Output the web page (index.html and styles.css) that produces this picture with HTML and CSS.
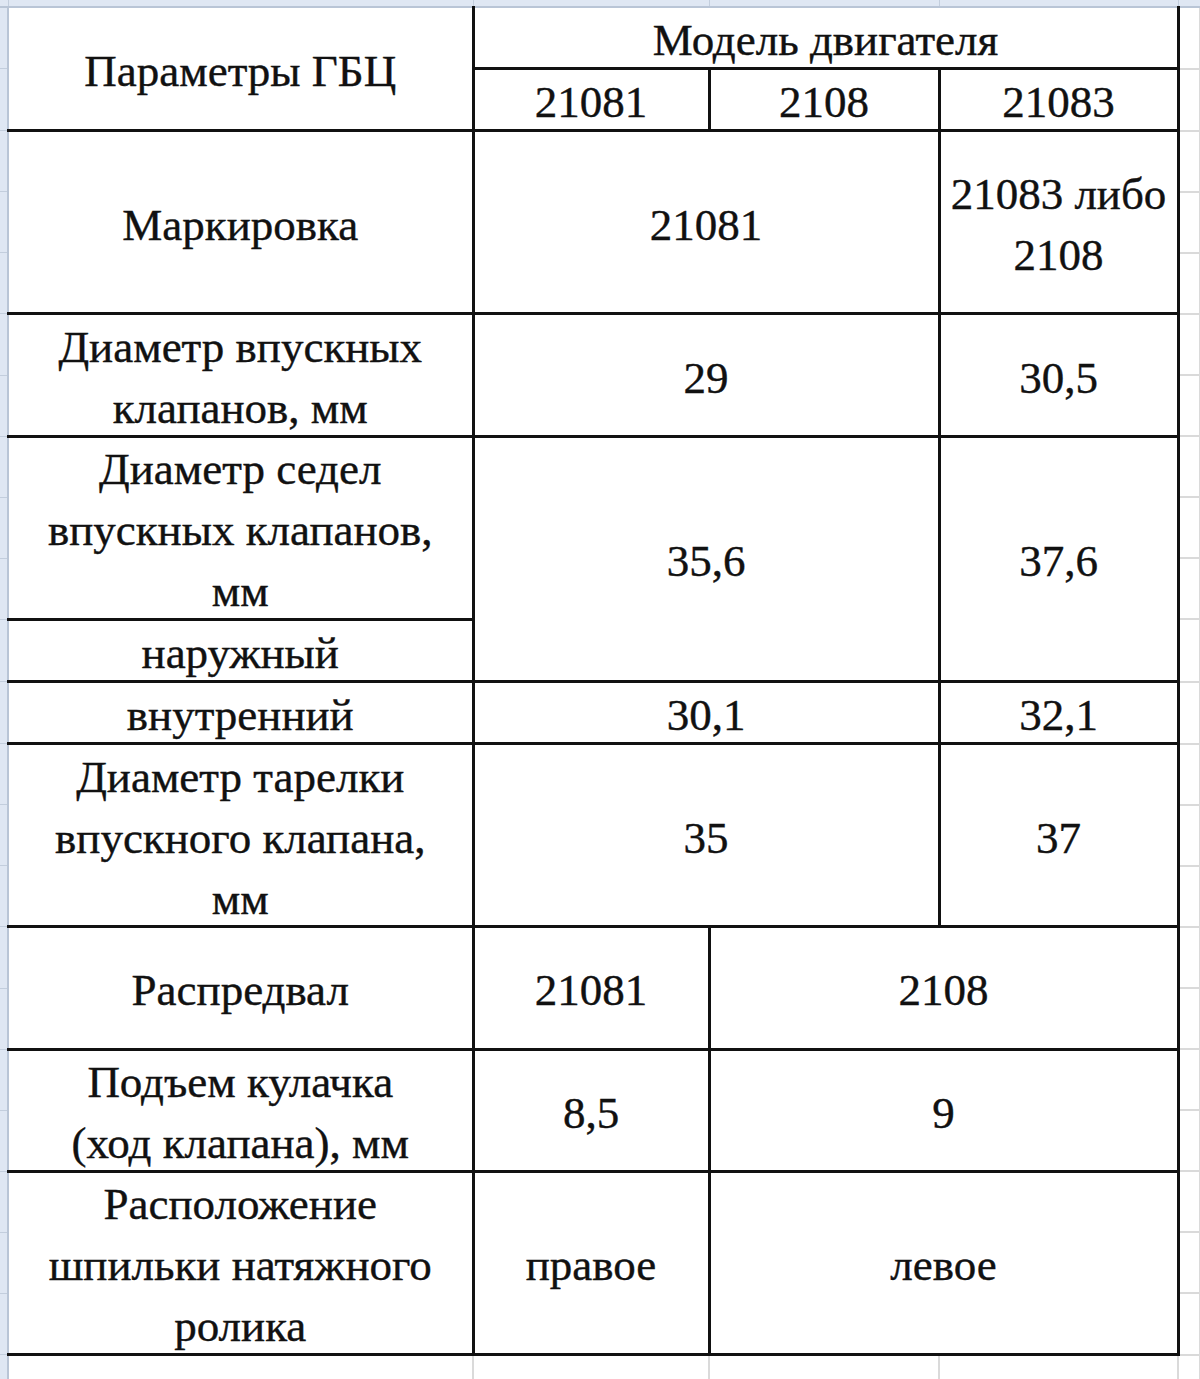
FILE: index.html
```html
<!DOCTYPE html>
<html lang="ru">
<head>
<meta charset="utf-8">
<title>Параметры ГБЦ</title>
<link rel="stylesheet" href="styles.css">
</head>
<body>
<table class="sheet">
  <colgroup>
    <col class="c-rh">
    <col class="c-a">
    <col class="c-b">
    <col class="c-c">
    <col class="c-d">
    <col class="c-e">
  </colgroup>
  <tr class="hdr">
    <td class="corner"></td>
    <td class="ch"></td>
    <td class="ch"></td>
    <td class="ch"></td>
    <td class="ch"></td>
    <td class="ch"></td>
  </tr>
  <tr class="r">
    <td class="rh"></td>
    <td class="cell first-col top" rowspan="2"><div class="t">Параметры ГБЦ</div></td>
    <td class="cell top" colspan="3"><div class="t">Модель двигателя</div></td>
    <td class="out"></td>
  </tr>
  <tr class="r">
    <td class="rh"></td>
    <td class="cell"><div class="t">21081</div></td>
    <td class="cell"><div class="t">2108</div></td>
    <td class="cell"><div class="t">21083</div></td>
    <td class="out"></td>
  </tr>
  <tr class="r">
    <td class="rh"></td>
    <td class="cell first-col" rowspan="3"><div class="t">Маркировка</div></td>
    <td class="cell" colspan="2" rowspan="3"><div class="t">21081</div></td>
    <td class="cell" rowspan="3"><div class="t">21083 либо<br>2108</div></td>
    <td class="out"></td>
  </tr>
  <tr class="r"><td class="rh"></td><td class="out"></td></tr>
  <tr class="r"><td class="rh"></td><td class="out"></td></tr>
  <tr class="r">
    <td class="rh"></td>
    <td class="cell first-col" rowspan="2"><div class="t">Диаметр впускных<br>клапанов, мм</div></td>
    <td class="cell" colspan="2" rowspan="2"><div class="t">29</div></td>
    <td class="cell" rowspan="2"><div class="t">30,5</div></td>
    <td class="out"></td>
  </tr>
  <tr class="r"><td class="rh"></td><td class="out"></td></tr>
  <tr class="r">
    <td class="rh"></td>
    <td class="cell first-col" rowspan="3"><div class="t">Диаметр седел<br>впускных клапанов,<br>мм</div></td>
    <td class="cell" colspan="2" rowspan="4"><div class="t">35,6</div></td>
    <td class="cell" rowspan="4"><div class="t">37,6</div></td>
    <td class="out"></td>
  </tr>
  <tr class="r"><td class="rh"></td><td class="out"></td></tr>
  <tr class="r"><td class="rh"></td><td class="out"></td></tr>
  <tr class="r">
    <td class="rh"></td>
    <td class="cell first-col"><div class="t">наружный</div></td>
    <td class="out"></td>
  </tr>
  <tr class="r">
    <td class="rh"></td>
    <td class="cell first-col"><div class="t">внутренний</div></td>
    <td class="cell" colspan="2"><div class="t">30,1</div></td>
    <td class="cell"><div class="t">32,1</div></td>
    <td class="out"></td>
  </tr>
  <tr class="r">
    <td class="rh"></td>
    <td class="cell first-col" rowspan="3"><div class="t">Диаметр тарелки<br>впускного клапана,<br>мм</div></td>
    <td class="cell" colspan="2" rowspan="3"><div class="t">35</div></td>
    <td class="cell" rowspan="3"><div class="t">37</div></td>
    <td class="out"></td>
  </tr>
  <tr class="r"><td class="rh"></td><td class="out"></td></tr>
  <tr class="r"><td class="rh"></td><td class="out"></td></tr>
  <tr class="r">
    <td class="rh"></td>
    <td class="cell first-col" rowspan="2"><div class="t">Распредвал</div></td>
    <td class="cell" rowspan="2"><div class="t">21081</div></td>
    <td class="cell" colspan="2" rowspan="2"><div class="t">2108</div></td>
    <td class="out"></td>
  </tr>
  <tr class="r"><td class="rh"></td><td class="out"></td></tr>
  <tr class="r">
    <td class="rh"></td>
    <td class="cell first-col" rowspan="2"><div class="t">Подъем кулачка<br>(ход клапана), мм</div></td>
    <td class="cell" rowspan="2"><div class="t">8,5</div></td>
    <td class="cell" colspan="2" rowspan="2"><div class="t">9</div></td>
    <td class="out"></td>
  </tr>
  <tr class="r"><td class="rh"></td><td class="out"></td></tr>
  <tr class="r">
    <td class="rh"></td>
    <td class="cell first-col" rowspan="3"><div class="t">Расположение<br>шпильки натяжного<br>ролика</div></td>
    <td class="cell" rowspan="3"><div class="t">правое</div></td>
    <td class="cell" colspan="2" rowspan="3"><div class="t">левое</div></td>
    <td class="out"></td>
  </tr>
  <tr class="r"><td class="rh"></td><td class="out"></td></tr>
  <tr class="r"><td class="rh"></td><td class="out"></td></tr>
  <tr class="tail">
    <td class="rh"></td>
    <td class="out"></td>
    <td class="out"></td>
    <td class="out"></td>
    <td class="out"></td>
    <td class="out"></td>
  </tr>
</table>
</body>
</html>
```

FILE: styles.css
```css
html, body {
  margin: 0;
  padding: 0;
  background: #ffffff;
}

body {
  width: 1200px;
  height: 1379px;
  overflow: hidden;
  font-family: "Liberation Serif", "Times New Roman", serif;
  color: #111111;
}

.sheet {
  border-collapse: collapse;
  table-layout: fixed;
  width: 1200px;
}

.c-rh { width: 8px; }
.c-a { width: 465px; }
.c-b { width: 236px; }
.c-c { width: 230px; }
.c-d { width: 239px; }
.c-e { width: 22px; }

.sheet td {
  padding: 0;
  border: 2px solid #d9d9d9;
}

.hdr td {
  height: 6px;
  background: #dfe7f3;
  border-top: none;
  border-bottom: 2px solid #b9c5d6;
  border-left: 1px solid #c3cedd;
  border-right: 1px solid #c3cedd;
}

.sheet td.corner {
  border-left: none;
}

.r td {
  height: 59.1px;
}

.sheet td.rh {
  background: #dfe7f3;
  border-left: none;
  border-right: 2px solid #b9c5d6;
  border-top: 1px solid #c3cedd;
  border-bottom: 1px solid #c3cedd;
}

.sheet td.cell {
  border: 3px solid #111111;
  text-align: center;
  vertical-align: middle;
  font-size: 45px;
  line-height: 61.1px;
  white-space: nowrap;
  -webkit-text-stroke: 0.4px #111111;
}

.t {
  margin: 0 0 -6px;
}

.sheet td.first-col {
  border-left: 2px solid #b9c5d6;
}

.sheet td.top {
  border-top: 2px solid #b9c5d6;
}

.sheet td.out {
  border-color: #dadada;
}

.tail td {
  height: 40px;
}

.sheet .tail td.out {
  border-bottom: none;
}
```
